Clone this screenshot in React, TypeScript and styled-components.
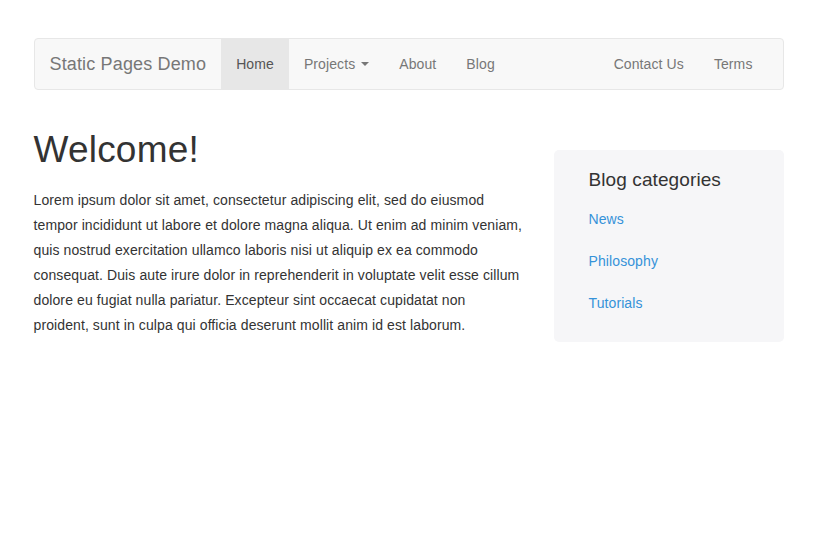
import React from "react";
import styled, { createGlobalStyle } from "styled-components";

const GlobalStyle = createGlobalStyle`
  * { box-sizing: border-box; }
  body {
    margin: 0;
    background: #fff;
    color: #333;
    font-family: "Liberation Sans", Arial, sans-serif;
    font-size: 14px;
    letter-spacing: 0.1px;
  }
`;

const Container = styled.div`
  width: 750px;
  margin: 0 auto;
  padding-top: 38px;
`;

const Navbar = styled.nav`
  display: flex;
  justify-content: space-between;
  height: 52px;
  background: #f8f8f8;
  border: 1px solid #e7e7e7;
  border-radius: 4px;
`;

const NavGroup = styled.ul<{ $right?: boolean }>`
  display: flex;
  margin: 0;
  padding: 0 ${(p) => (p.$right ? "15px" : "0")} 0 0;
  list-style: none;

  li {
    display: flex;
  }
`;

const Brand = styled.a`
  display: flex;
  align-items: center;
  height: 50px;
  padding: 0 15px;
  font-size: 18px;
  letter-spacing: 0.15px;
  color: #777;
  text-decoration: none;
`;

const NavLink = styled.a<{ $active?: boolean }>`
  display: flex;
  align-items: center;
  height: 50px;
  padding: 0 15px;
  color: ${(p) => (p.$active ? "#555" : "#777")};
  background: ${(p) => (p.$active ? "#e7e7e7" : "transparent")};
  text-decoration: none;
`;

const Caret = styled.span`
  display: inline-block;
  width: 0;
  height: 0;
  margin-left: 6px;
  border-top: 4px solid #777;
  border-left: 4px solid transparent;
  border-right: 4px solid transparent;
`;

const Row = styled.div`
  display: flex;
  justify-content: space-between;
  align-items: flex-start;
  margin-top: 20px;
`;

const Main = styled.main`
  width: 489px;
`;

const Title = styled.h1`
  margin: 20px 0 18px;
  font-size: 37px;
  font-weight: 400;
  line-height: 40px;
  letter-spacing: 0.2px;
  color: #333;
`;

const Lead = styled.p`
  margin: 0;
  font-size: 14px;
  line-height: 25px;
  color: #333;
`;

const Sidebar = styled.aside`
  width: 230px;
  margin-top: 40px;
  padding: 20px 35px 18px;
  background: #f6f6f8;
  border-radius: 5px;
`;

const SideTitle = styled.h3`
  margin: 0 0 8px;
  font-size: 19px;
  font-weight: 400;
  line-height: 20px;
  color: #333;
`;

const CategoryList = styled.ul`
  margin: 0;
  padding: 0;
  list-style: none;
`;

const CategoryLink = styled.a`
  display: block;
  line-height: 42px;
  font-size: 14px;
  color: #3592d9;
  text-decoration: none;
`;

const categories = ["News", "Philosophy", "Tutorials"];

export default function App() {
  return (
    <>
      <GlobalStyle />
      <Container>
        <Navbar>
          <NavGroup>
            <li><Brand href="#">Static Pages Demo</Brand></li>
            <li><NavLink href="#" $active>Home</NavLink></li>
            <li><NavLink href="#">Projects<Caret /></NavLink></li>
            <li><NavLink href="#">About</NavLink></li>
            <li><NavLink href="#">Blog</NavLink></li>
          </NavGroup>
          <NavGroup $right>
            <li><NavLink href="#">Contact Us</NavLink></li>
            <li><NavLink href="#">Terms</NavLink></li>
          </NavGroup>
        </Navbar>
        <Row>
          <Main>
            <Title>Welcome!</Title>
            <Lead>
              Lorem ipsum dolor sit amet, consectetur adipiscing elit, sed do eiusmod tempor
              incididunt ut labore et dolore magna aliqua. Ut enim ad minim veniam, quis nostrud
              exercitation ullamco laboris nisi ut aliquip ex ea commodo consequat. Duis aute irure
              dolor in reprehenderit in voluptate velit esse cillum dolore eu fugiat nulla pariatur.
              Excepteur sint occaecat cupidatat non proident, sunt in culpa qui officia deserunt
              mollit anim id est laborum.
            </Lead>
          </Main>
          <Sidebar>
            <SideTitle>Blog categories</SideTitle>
            <CategoryList>
              {categories.map((c) => (
                <li key={c}><CategoryLink href="#">{c}</CategoryLink></li>
              ))}
            </CategoryList>
          </Sidebar>
        </Row>
      </Container>
    </>
  );
}
